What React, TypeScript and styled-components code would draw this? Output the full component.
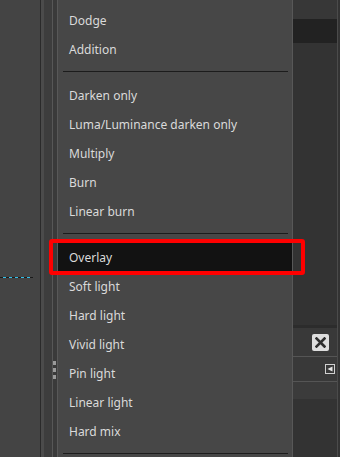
import styled, { createGlobalStyle } from 'styled-components';

const GlobalStyle = createGlobalStyle`
  html, body {
    margin: 0;
    padding: 0;
    background: #444444;
  }
  body {
    font-family: "Noto Sans", "Open Sans", sans-serif;
  }
`;

const Screen = styled.div`
  display: flex;
  width: 340px;
  height: 457px;
  overflow: hidden;
  position: relative;
  background: #444444;
`;

const Canvas = styled.div`
  width: 40px;
  flex: none;
  background: #444444;
  padding-top: 277px;
  box-sizing: border-box;
`;

const GuideLine = styled.div`
  width: 33px;
  height: 1px;
  background: repeating-linear-gradient(90deg, #1a1a1a 0 3px, #33c0ea 3px 6px);
`;

const Strip = styled.div<{ $w: number; $bg: string }>`
  width: ${(p) => p.$w}px;
  flex: none;
  background: ${(p) => p.$bg};
`;

const HandleStrip = styled.div`
  width: 4px;
  flex: none;
  background: #3a3a3a;
  padding-top: 361px;
  box-sizing: border-box;
  display: flex;
  flex-direction: column;
  gap: 3px;
`;

const HandleDot = styled.div`
  width: 3px;
  height: 4px;
  flex: none;
  background: #9a9a9a;
`;

const Menu = styled.div`
  width: 236px;
  flex: none;
  box-sizing: border-box;
  background: #474747;
  border-left: 1px solid #585858;
  border-right: 1px solid #585858;
  padding-top: 6px;
  display: flex;
  flex-direction: column;
`;

const Item = styled.div<{ $active?: boolean }>`
  height: 29px;
  flex: none;
  display: flex;
  align-items: center;
  padding-left: 11px;
  font-size: 12px;
  color: #dadada;
  background: ${(p) => (p.$active ? '#121212' : 'transparent')};
  position: relative;
  white-space: nowrap;
`;

const Separator = styled.div`
  height: 1px;
  flex: none;
  margin: 7px 4px 9px 5px;
  background: #1c1c1c;
`;

const Highlight = styled.div`
  position: absolute;
  left: -9px;
  top: -4px;
  width: 256px;
  height: 36px;
  box-sizing: border-box;
  border: 4px solid #ff0000;
  border-radius: 3px;
  pointer-events: none;
`;

const RightPane = styled.div`
  flex: 1;
  display: flex;
  background: #323232;
`;

const PaneBody = styled.div`
  width: 44px;
  display: flex;
  flex-direction: column;
`;

const Band = styled.div<{ $h: number; $bg: string }>`
  height: ${(p) => p.$h}px;
  background: ${(p) => p.$bg};
  flex: none;
`;

const Filler = styled.div`
  flex: 1;
  background: #333333;
`;

const ToolRow = styled.div<{ $h: number }>`
  height: ${(p) => p.$h}px;
  flex: none;
  display: flex;
  align-items: center;
  justify-content: flex-end;
  background: #393939;
  border-bottom: 1px solid #555555;
  box-sizing: border-box;
`;

const CloseButton = styled.div`
  width: 17px;
  height: 17px;
  margin-right: 8px;
  background: #dedede;
  border-radius: 2px;
  display: flex;
  align-items: center;
  justify-content: center;
`;

const MenuButton = styled.div`
  width: 10px;
  height: 10px;
  margin-right: 2px;
  box-sizing: border-box;
  border: 1px solid #d0d0d0;
  display: flex;
  align-items: center;
  justify-content: center;
`;

const EdgeLine = styled.div`
  width: 1px;
  background: #4b4b4b;
  flex: none;
`;

const items1 = ['Dodge', 'Addition'];
const items2 = ['Darken only', 'Luma/Luminance darken only', 'Multiply', 'Burn', 'Linear burn'];
const items3 = ['Overlay', 'Soft light', 'Hard light', 'Vivid light', 'Pin light', 'Linear light', 'Hard mix'];

function App() {
  return (
    <>
      <GlobalStyle />
      <Screen>
        <Canvas>
          <GuideLine />
        </Canvas>
        <Strip $w={1} $bg="#2a2a2a" />
        <Strip $w={3} $bg="#4b4b4b" />
        <Strip $w={8} $bg="#3d3d3d" />
        <Strip $w={1} $bg="#575757" />
        <HandleStrip>
          <HandleDot />
          <HandleDot />
          <HandleDot />
        </HandleStrip>
        <Menu>
          {items1.map((t) => (
            <Item key={t}>{t}</Item>
          ))}
          <Separator />
          {items2.map((t) => (
            <Item key={t}>{t}</Item>
          ))}
          <Separator />
          {items3.map((t, i) => (
            <Item key={t} $active={i === 0}>
              {t}
              {i === 0 && <Highlight />}
            </Item>
          ))}
          <Separator />
        </Menu>
        <RightPane>
          <PaneBody>
            <Band $h={19} $bg="#373737" />
            <Band $h={24} $bg="#222222" />
            <Filler />
            <Band $h={3} $bg="#2c2c2c" />
            <ToolRow $h={29}>
              <CloseButton>
                <svg width="11" height="11" viewBox="0 0 11 11">
                  <path d="M1.5 1.5 L9.5 9.5 M9.5 1.5 L1.5 9.5" stroke="#2e2e2e" strokeWidth="2.6" strokeLinecap="square" />
                </svg>
              </CloseButton>
            </ToolRow>
            <ToolRow $h={25}>
              <MenuButton>
                <svg width="6" height="6" viewBox="0 0 6 6">
                  <path d="M5.5 0.5 L0.5 3 L5.5 5.5 Z" fill="#e6e6e6" />
                </svg>
              </MenuButton>
            </ToolRow>
            <Band $h={17} $bg="#3b3b3b" />
            <Band $h={58} $bg="#333333" />
          </PaneBody>
          <EdgeLine />
          <Strip $w={2} $bg="#333333" />
        </RightPane>
      </Screen>
    </>
  );
}

export default App;
